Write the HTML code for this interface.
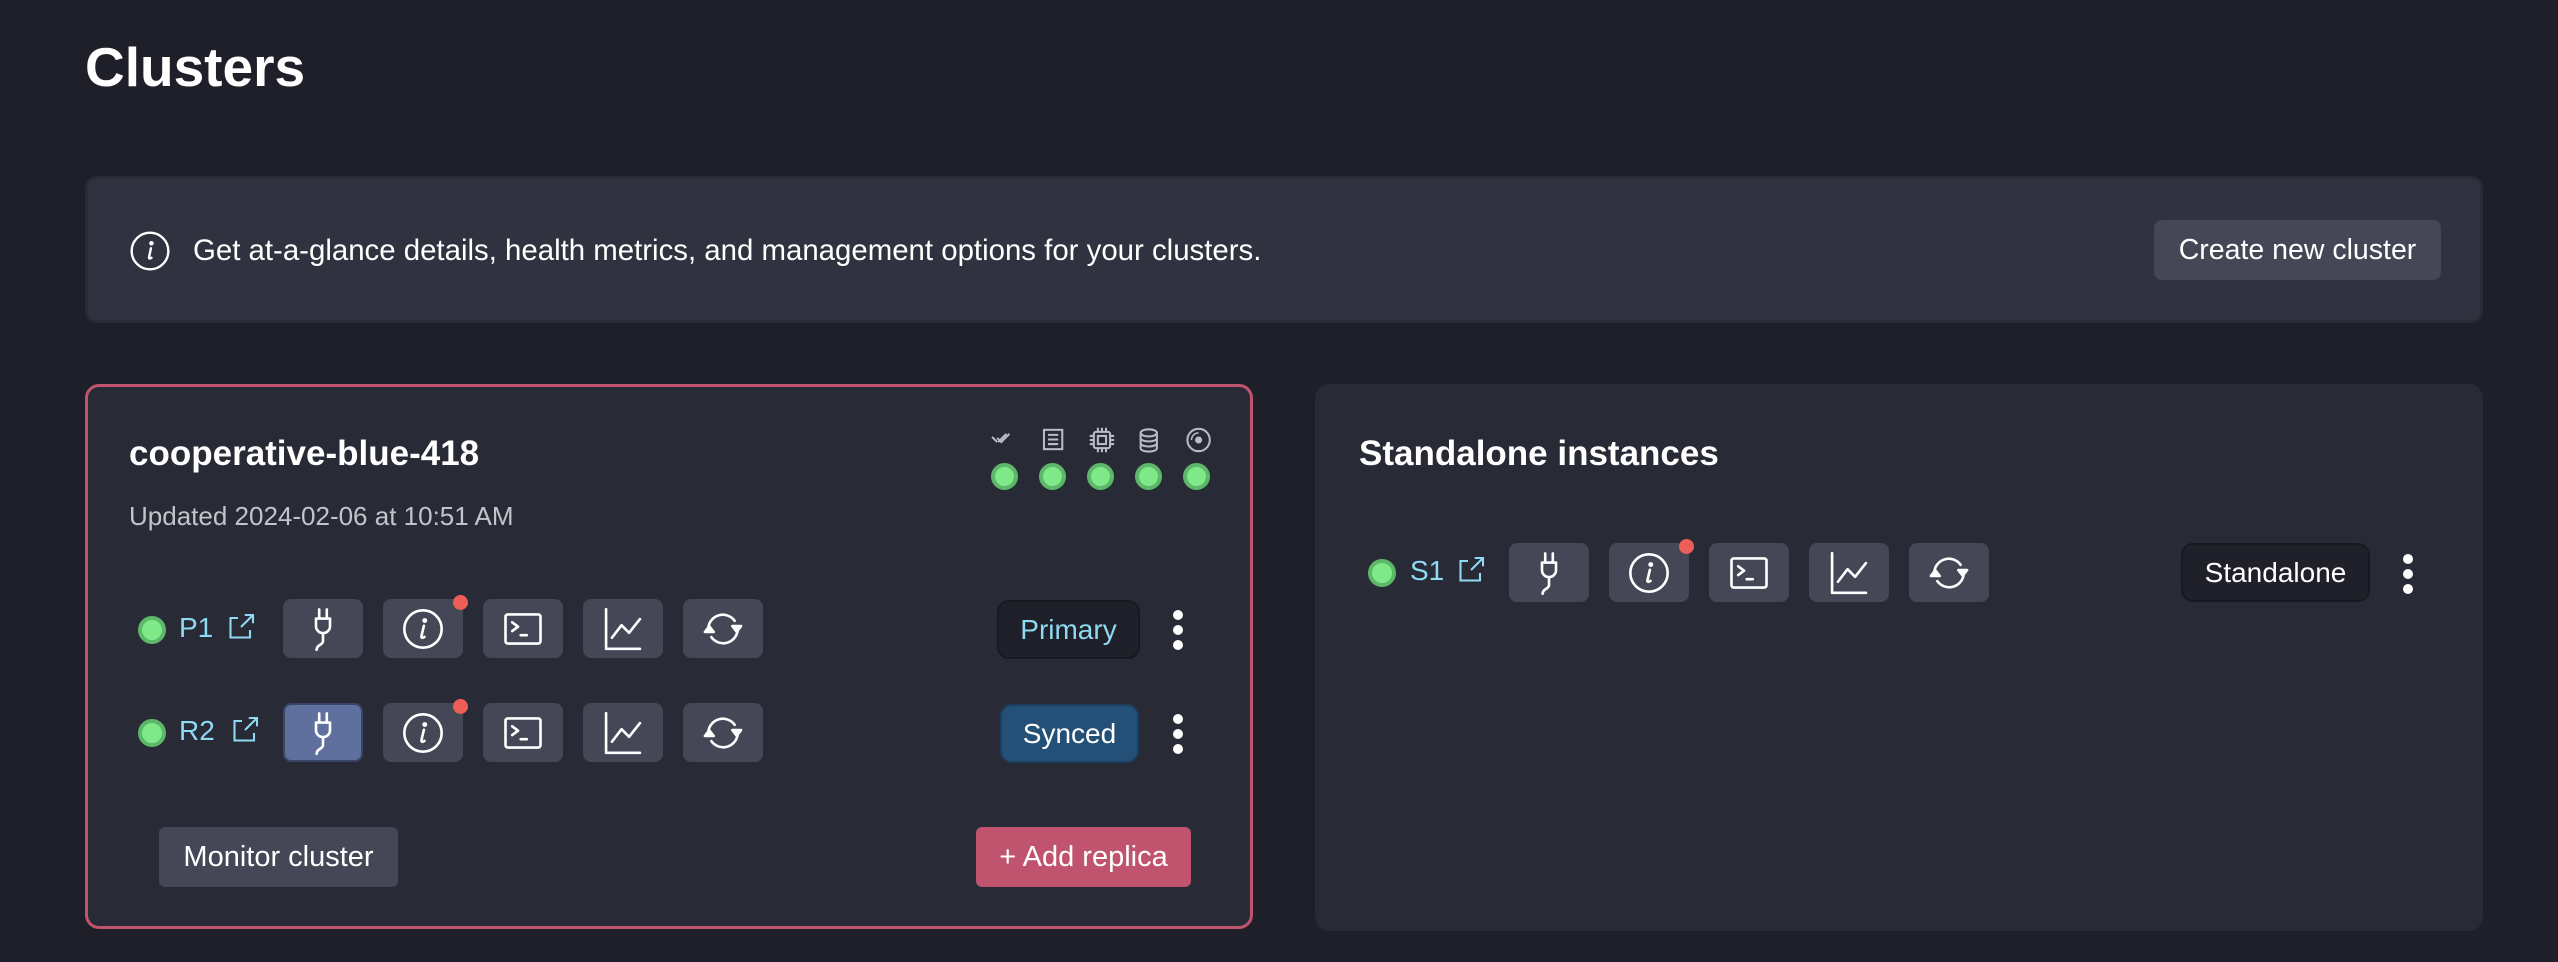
<!DOCTYPE html>
<html><head><meta charset="utf-8"><style>
*{box-sizing:border-box;margin:0;padding:0}
body{width:2558px;height:962px;background:#1f1f29;font-family:"Liberation Sans",sans-serif;color:#fff;position:relative;overflow:hidden}
.a{position:absolute}
.btn{position:absolute;width:80px;height:59px;background:#454656;border-radius:8px;display:flex;align-items:center;justify-content:center;overflow:visible}
.btn svg{width:70px;height:70px;flex:none;fill:none;stroke:#fff;stroke-width:0.9;stroke-linecap:round;stroke-linejoin:round}
.rd{position:absolute;width:15px;height:15px;border-radius:50%;background:#ec5f59}
.dot{position:absolute;width:28px;height:28px;border-radius:50%;background:#7fe98a;border:4px solid #5cb868}
.sdot{position:absolute;width:27px;height:27px;border-radius:50%;background:#7fe98a;border:4px solid #5cb868}
.lbl{position:absolute;color:#8fd9f2;font-size:28px}
.kb{position:absolute;width:10px}
.kb i{display:block;width:10px;height:10px;border-radius:50%;background:#fff;margin-bottom:5px}
.badge{position:absolute;height:59px;border-radius:12px;display:flex;align-items:center;justify-content:center;font-size:28px}
</style></head><body>
<svg width="0" height="0" style="position:absolute">
<defs>
<g id="plug"><path d="M10.7 5.3v3.1M13.3 5.3v3.1M9.6 8.4h4.8v2.6a2.4 2.4 0 0 1-4.8 0zM12 13.4v2.7c0 1.4-2.2 1.3-2.2 3"/></g>
<g id="info"><circle cx="12" cy="12" r="6.4"/><path d="M12.3 10.9l-0.8 3.4c-0.2 0.8 0.4 0.9 1 0.4"/><circle cx="12.6" cy="9.1" r="0.4" fill="#fff"/></g>
<g id="term"><rect x="6" y="7" width="12" height="10" rx="0.8"/><path d="M8.3 9.7l2 1.5-2 1.5M11.2 14.1h2.1"/></g>
<g id="chart"><path d="M6.2 5.2v13.6h11.6M8.2 15l3.3-4.3 2.6 2.6 3.7-4.7"/></g>
<g id="sync"><path d="M7 11.3a5 5 0 0 1 9-2.1M17 12.7a5 5 0 0 1-9 2.1"/><path d="M15.2 11h3l-1.5 1.9z" fill="#fff"/><path d="M8.8 13h-3l1.5-1.9z" fill="#fff"/></g>
<g id="ext"><path d="M10 6H5v13h13v-5M12 12l8-8M14.5 4H20v5.5"/></g>
</defs></svg>

<div class="a" style="left:85px;top:32px;font-size:55px;font-weight:bold;line-height:70px">Clusters</div>

<div class="a" style="left:85px;top:176px;width:2398px;height:147px;background:#31323f;border:3px solid #2a2b37;border-radius:12px"></div>
<svg class="a" style="left:128px;top:229px" width="44" height="44" viewBox="0 0 24 24" fill="none" stroke="#fff" stroke-width="1.3"><circle cx="12" cy="12" r="10"/><path d="M12.5 10.5l-1 4.8c-0.2 0.9 0.5 1 1.3 0.4" stroke-linecap="round"/><circle cx="12.8" cy="7.8" r="0.6" fill="#fff"/></svg>
<div class="a" style="left:193px;top:233px;font-size:29.4px;line-height:36px">Get at-a-glance details, health metrics, and management options for your clusters.</div>
<div class="a" style="left:2154px;top:220px;width:287px;height:60px;background:#454656;border-radius:8px;font-size:28.5px;display:flex;align-items:center;justify-content:center">Create new cluster</div>

<div class="a" style="left:85px;top:384px;width:1168px;height:545px;background:#282a35;border:3px solid #c0546f;border-radius:14px"></div>
<div class="a" style="left:129px;top:432px;font-size:35px;font-weight:bold;line-height:44px">cooperative-blue-418</div>
<div class="a" style="left:129px;top:501px;font-size:26px;color:#c3c3ca;line-height:30px">Updated 2024-02-06 at 10:51 AM</div>

<svg class="a" style="left:988px;top:424px" width="234" height="32" viewBox="0 0 230 28" fill="none" stroke="#bcbcc4" stroke-width="2">
<path d="M4 11l5 5M10 16l8-8M9 12l4 4 8-8"/>
<rect x="55" y="4" width="18" height="19"/><path d="M59 9h10M59 13.5h10M59 18h10"/>
<rect x="104" y="6" width="16" height="16" rx="2"/><rect x="108" y="10" width="8" height="8"/><path d="M108 2v4M112 2v4M116 2v4M108 22v4M112 22v4M116 22v4M100 10h4M100 14h4M100 18h4M120 10h4M120 14h4M120 18h4"/>
<ellipse cx="158" cy="7" rx="8" ry="3.5"/><path d="M150 7v15c0 4.5 16 4.5 16 0V7M150 12c0 4.5 16 4.5 16 0M150 17c0 4.5 16 4.5 16 0"/>
<circle cx="207" cy="14" r="11"/><path d="M200 14a7 7 0 0 1 7-7" stroke-width="1.5"/><circle cx="207" cy="14" r="2.5" fill="#bcbcc4"/>
</svg>
<div class="sdot" style="left:991px;top:463px"></div>
<div class="sdot" style="left:1039px;top:463px"></div>
<div class="sdot" style="left:1087px;top:463px"></div>
<div class="sdot" style="left:1135px;top:463px"></div>
<div class="sdot" style="left:1183px;top:463px"></div>

<div class="dot" style="left:138px;top:616px"></div>
<div class="lbl" style="left:179px;top:612px">P1</div>
<svg class="a" style="left:223px;top:609px" width="36" height="36" viewBox="0 0 24 24" fill="none" stroke="#8fd9f2" stroke-width="1.4"><use href="#ext"/></svg>
<div class="btn" style="left:283px;top:599px"><svg viewBox="0 0 24 24"><use href="#plug"/></svg></div>
<div class="btn" style="left:383px;top:599px"><svg viewBox="0 0 24 24"><use href="#info"/></svg></div>
<div class="rd" style="left:453px;top:595px"></div>
<div class="btn" style="left:483px;top:599px"><svg viewBox="0 0 24 24"><use href="#term"/></svg></div>
<div class="btn" style="left:583px;top:599px"><svg viewBox="0 0 24 24"><use href="#chart"/></svg></div>
<div class="btn" style="left:683px;top:599px"><svg viewBox="0 0 24 24"><use href="#sync"/></svg></div>
<div class="badge" style="left:997px;top:600px;width:143px;background:#1f2029;border:2px solid #181920;color:#8fd9f2">Primary</div>
<div class="kb" style="left:1173px;top:610px"><i></i><i></i><i></i></div>

<div class="dot" style="left:138px;top:719px"></div>
<div class="lbl" style="left:179px;top:715px">R2</div>
<svg class="a" style="left:227px;top:712px" width="36" height="36" viewBox="0 0 24 24" fill="none" stroke="#8fd9f2" stroke-width="1.4"><use href="#ext"/></svg>
<div class="btn" style="left:283px;top:703px;background:#5f6f9e;border:2px solid #3a4464"><svg viewBox="0 0 24 24"><use href="#plug"/></svg></div>
<div class="btn" style="left:383px;top:703px"><svg viewBox="0 0 24 24"><use href="#info"/></svg></div>
<div class="rd" style="left:453px;top:699px"></div>
<div class="btn" style="left:483px;top:703px"><svg viewBox="0 0 24 24"><use href="#term"/></svg></div>
<div class="btn" style="left:583px;top:703px"><svg viewBox="0 0 24 24"><use href="#chart"/></svg></div>
<div class="btn" style="left:683px;top:703px"><svg viewBox="0 0 24 24"><use href="#sync"/></svg></div>
<div class="badge" style="left:1000px;top:704px;width:139px;background:#245078;border:2px solid #1c3f60;color:#fff">Synced</div>
<div class="kb" style="left:1173px;top:714px"><i></i><i></i><i></i></div>

<div class="a" style="left:159px;top:827px;width:239px;height:60px;background:#454656;border-radius:6px;font-size:29px;display:flex;align-items:center;justify-content:center">Monitor cluster</div>
<div class="a" style="left:976px;top:827px;width:215px;height:60px;background:#c0546f;border-radius:6px;font-size:29px;display:flex;align-items:center;justify-content:center">+ Add replica</div>

<div class="a" style="left:1315px;top:384px;width:1168px;height:547px;background:#282a35;border-radius:14px"></div>
<div class="a" style="left:1359px;top:432px;font-size:35px;font-weight:bold;line-height:44px">Standalone instances</div>
<div class="dot" style="left:1368px;top:559px"></div>
<div class="lbl" style="left:1410px;top:555px">S1</div>
<svg class="a" style="left:1453px;top:552px" width="36" height="36" viewBox="0 0 24 24" fill="none" stroke="#8fd9f2" stroke-width="1.4"><use href="#ext"/></svg>
<div class="btn" style="left:1509px;top:543px"><svg viewBox="0 0 24 24"><use href="#plug"/></svg></div>
<div class="btn" style="left:1609px;top:543px"><svg viewBox="0 0 24 24"><use href="#info"/></svg></div>
<div class="rd" style="left:1679px;top:539px"></div>
<div class="btn" style="left:1709px;top:543px"><svg viewBox="0 0 24 24"><use href="#term"/></svg></div>
<div class="btn" style="left:1809px;top:543px"><svg viewBox="0 0 24 24"><use href="#chart"/></svg></div>
<div class="btn" style="left:1909px;top:543px"><svg viewBox="0 0 24 24"><use href="#sync"/></svg></div>
<div class="badge" style="left:2181px;top:543px;width:189px;background:#1f2029;border:2px solid #181920;color:#fff">Standalone</div>
<div class="kb" style="left:2403px;top:554px"><i></i><i></i><i></i></div>
</body></html>
